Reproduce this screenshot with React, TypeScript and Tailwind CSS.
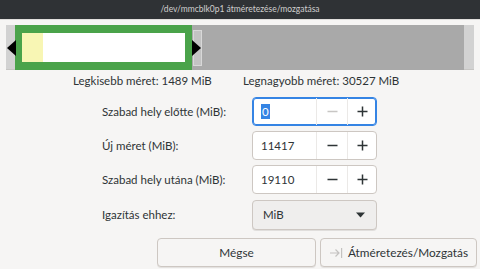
import React from "react";

function Minus({ disabled }: { disabled?: boolean }) {
  return (
    <svg width="11" height="11" viewBox="0 0 11 11">
      <rect x="0.5" y="4.75" width="10" height="1.5" fill={disabled ? "#c8c6c4" : "#2e3436"} />
    </svg>
  );
}
function Plus() {
  return (
    <svg width="11" height="11" viewBox="0 0 11 11">
      <rect x="0.5" y="4.75" width="10" height="1.5" fill="#2e3436" />
      <rect x="4.75" y="0.5" width="1.5" height="10" fill="#2e3436" />
    </svg>
  );
}

function Spin({ value, focused }: { value: string; focused?: boolean }) {
  return (
    <div
      className={
        focused
          ? "flex h-[29px] w-[125px] shrink-0 rounded-[4px] bg-white border border-[#3584e4] shadow-[inset_0_0_0_1px_#3584e4]"
          : "flex h-[29px] w-[125px] shrink-0 rounded-[4px] bg-white border border-[#cdc7c2]"
      }
    >
      <div className="flex w-[63px] items-center pl-[8px] text-[11.5px] text-[#2e3436]">
        {focused ? (
          <span className="bg-[#3584e4] text-white leading-[15px] px-[1px]">{value}</span>
        ) : (
          value
        )}
      </div>
      <div className="flex w-[31px] items-center justify-center border-l border-[#ebe9e7]">
        <Minus disabled={focused} />
      </div>
      <div className="flex flex-1 items-center justify-center border-l border-[#ebe9e7]">
        <Plus />
      </div>
    </div>
  );
}

function Row({ label, children }: { label: string; children: React.ReactNode }) {
  return (
    <div className="flex items-center">
      <div className="w-[252px] shrink-0 pl-[102px] whitespace-nowrap text-[11.5px] text-[#2e3436]">{label}</div>
      {children}
    </div>
  );
}

export default function App() {
  return (
    <div className="w-[480px] h-[269px] overflow-hidden bg-[#f6f5f4] font-[Lato,sans-serif]">
      <div className="h-[20px] bg-[#2f3235] flex items-center justify-center text-[8.5px] text-[#cfcfcf] border-b border-[#e0dedc]">
        /dev/mmcblk0p1 átméretezése/mozgatása
      </div>
      {/* partition bar */}
      <div className="mt-[5px] ml-[6px] w-[468px] h-[45px] bg-[#d2d2d2] border-b border-[#c6c5c3] relative flex">
        <div className="ml-[9px] w-[177px] h-[45px] shrink-0 bg-[#4aa34a] pt-[8px] pb-[8px] pl-[7px] pr-[7px]">
          <div className="w-full h-full bg-white flex">
            <div className="w-[21px] h-full bg-[#f8f6b4]" />
          </div>
        </div>
        <div className="w-[272px] h-[45px] shrink-0 bg-[#a9a9a9] relative">
          <div className="absolute left-[1px] top-[5px] w-[9px] h-[36px] bg-[#c3c3c3] border border-[#d8d8d8]" />
        </div>
        <svg className="absolute left-[1px] top-[15px]" width="9" height="16" viewBox="0 0 9 16">
          <polygon points="9,0 0,8 9,16" fill="#000" />
        </svg>
        <svg className="absolute left-[186px] top-[15px]" width="9" height="16" viewBox="0 0 9 16">
          <polygon points="0,0 9,8 0,16" fill="#000" />
        </svg>
      </div>
      <div className="flex h-[21px] items-center text-[11.5px] text-[#2e3436]">
        <div className="w-[243px] shrink-0 pl-[73px] whitespace-nowrap">Legkisebb méret: 1489 MiB</div>
        <div className="whitespace-nowrap">Legnagyobb méret: 30527 MiB</div>
      </div>
      <div className="mt-[6px] flex flex-col gap-[5px]">
        <Row label="Szabad hely előtte (MiB):">
          <Spin value="0" focused />
        </Row>
        <Row label="Új méret (MiB):">
          <Spin value="11417" />
        </Row>
        <Row label="Szabad hely utána (MiB):">
          <Spin value="19110" />
        </Row>
        <Row label="Igazítás ehhez:">
          <div className="mt-[1px] flex h-[30px] w-[125px] shrink-0 items-center justify-between rounded-[4px] border border-[#cdc7c2] bg-[#efeeed] pl-[10px] pr-[11px] text-[11.5px] text-[#2e3436] shadow-[0_1px_0_#e0dedc]">
            <span>MiB</span>
            <svg width="9" height="6" viewBox="0 0 9 6">
              <polygon points="0,0.5 9,0.5 4.5,5.5" fill="#2e3436" />
            </svg>
          </div>
        </Row>
      </div>
      <div className="mt-[8px] flex gap-[4px] pl-[157px]">
        <div className="flex h-[29px] w-[159px] shrink-0 items-center justify-center rounded-[4px] border border-[#cdc7c2] bg-[#f6f5f4] text-[11.8px] text-[#2e3436] shadow-[0_1px_0_#e4e2e0]">
          Mégse
        </div>
        <div className="flex h-[29px] w-[157px] shrink-0 items-center justify-center gap-[5px] rounded-[4px] border border-[#cdc7c2] bg-[#f6f5f4] text-[11.8px] text-[#2e3436] shadow-[0_1px_0_#e4e2e0]">
          <svg width="14" height="12" viewBox="0 0 14 12">
            <path d="M1 6 H10 M6.5 2.5 L10 6 L6.5 9.5" stroke="#c4c2c0" strokeWidth="1.2" fill="none" />
            <rect x="12" y="1" width="1.2" height="10" fill="#c4c2c0" />
          </svg>
          <span>Átméretezés/Mozgatás</span>
        </div>
      </div>
    </div>
  );
}
